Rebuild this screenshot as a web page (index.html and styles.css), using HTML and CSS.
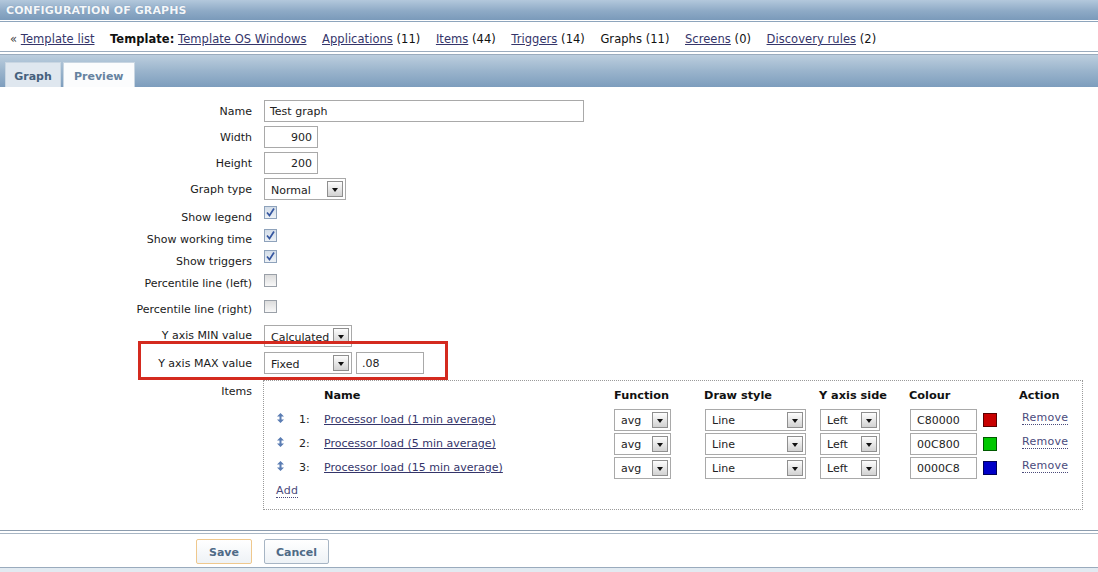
FILE: index.html
```html
<!DOCTYPE html>
<html>
<head>
<meta charset="utf-8">
<link rel="stylesheet" href="styles.css">
</head>
<body>
<div class="page">
  <div class="hdr">CONFIGURATION OF GRAPHS</div>
  <div class="nav">
    <span class="nav-item"><span class="raquo">&laquo;</span> <a href="#">Template list</a></span>
    <span class="nav-item"><b>Template:</b> <a href="#">Template OS Windows</a></span>
    <span class="nav-item"><a href="#">Applications</a> (11)</span>
    <span class="nav-item"><a href="#">Items</a> (44)</span>
    <span class="nav-item"><a href="#">Triggers</a> (14)</span>
    <span class="nav-item">Graphs (11)</span>
    <span class="nav-item"><a href="#">Screens</a> (0)</span>
    <span class="nav-item"><a href="#">Discovery rules</a> (2)</span>
  </div>
  <div class="sep"></div>
  <div class="tabbar">
    <div class="tab active">Graph</div>
    <div class="tab">Preview</div>
  </div>

  <div class="form">
    <div class="row r-text">
      <div class="lbl">Name</div>
      <div class="ctl"><div class="inp w-name">Test graph</div></div>
    </div>
    <div class="row r-text">
      <div class="lbl">Width</div>
      <div class="ctl"><div class="inp w-num num">900</div></div>
    </div>
    <div class="row r-text">
      <div class="lbl">Height</div>
      <div class="ctl"><div class="inp w-num num">200</div></div>
    </div>
    <div class="row r-text">
      <div class="lbl">Graph type</div>
      <div class="ctl"><div class="sel w-type"><span class="sel-t">Normal</span><span class="arr"></span></div></div>
    </div>
    <div class="row r-legend">
      <div class="lbl">Show legend</div>
      <div class="ctl"><span class="cb on"><svg viewBox="0 0 13 13" width="13" height="13"><path d="M3 6.5 L5.5 9.5 L10 2.5" fill="none" stroke="#3556a0" stroke-width="1.7"/></svg></span></div>
    </div>
    <div class="row r-work">
      <div class="lbl">Show working time</div>
      <div class="ctl"><span class="cb on"><svg viewBox="0 0 13 13" width="13" height="13"><path d="M3 6.5 L5.5 9.5 L10 2.5" fill="none" stroke="#3556a0" stroke-width="1.7"/></svg></span></div>
    </div>
    <div class="row r-trig">
      <div class="lbl">Show triggers</div>
      <div class="ctl"><span class="cb on"><svg viewBox="0 0 13 13" width="13" height="13"><path d="M3 6.5 L5.5 9.5 L10 2.5" fill="none" stroke="#3556a0" stroke-width="1.7"/></svg></span></div>
    </div>
    <div class="row r-pl">
      <div class="lbl">Percentile line (left)</div>
      <div class="ctl"><span class="cb"></span></div>
    </div>
    <div class="row r-pr">
      <div class="lbl">Percentile line (right)</div>
      <div class="ctl"><span class="cb"></span></div>
    </div>
    <div class="row r-min">
      <div class="lbl">Y axis MIN value</div>
      <div class="ctl"><div class="sel w-y"><span class="sel-t">Calculated</span><span class="arr"></span></div></div>
    </div>
    <div class="row r-max">
      <div class="lbl">Y axis MAX value</div>
      <div class="ctl ctl-inline"><div class="sel w-y"><span class="sel-t">Fixed</span><span class="arr"></span></div><div class="inp w-max">.08</div></div>
      <div class="highlight"></div>
    </div>
    <div class="row r-items">
      <div class="lbl">Items</div>
      <div class="ctl">
        <div class="items">
          <div class="irow ihead">
            <span></span><span></span><span></span>
            <span>Name</span><span>Function</span><span>Draw style</span><span>Y axis side</span><span>Colour</span><span>Action</span>
          </div>
          <div class="irow">
            <span></span>
            <span class="drag"><svg viewBox="0 0 7 10" width="7" height="10"><path d="M3.5 0 L7 3.5 H4.5 V6.5 H7 L3.5 10 L0 6.5 H2.5 V3.5 H0 Z" fill="#5b7db3"/></svg></span>
            <span class="nr">1:</span>
            <span><a href="#">Processor load (1 min average)</a></span>
            <span><span class="sel w-fn"><span class="sel-t">avg</span><span class="arr"></span></span></span>
            <span class="c-draw"><span class="sel w-draw"><span class="sel-t">Line</span><span class="arr"></span></span></span>
            <span class="c-draw"><span class="sel w-side"><span class="sel-t">Left</span><span class="arr"></span></span></span>
            <span class="c-col"><span class="inp w-col">C80000</span><span class="sw sw-r"></span></span>
            <span class="c-act"><a href="#" class="dot">Remove</a></span>
          </div>
          <div class="irow">
            <span></span>
            <span class="drag"><svg viewBox="0 0 7 10" width="7" height="10"><path d="M3.5 0 L7 3.5 H4.5 V6.5 H7 L3.5 10 L0 6.5 H2.5 V3.5 H0 Z" fill="#5b7db3"/></svg></span>
            <span class="nr">2:</span>
            <span><a href="#">Processor load (5 min average)</a></span>
            <span><span class="sel w-fn"><span class="sel-t">avg</span><span class="arr"></span></span></span>
            <span class="c-draw"><span class="sel w-draw"><span class="sel-t">Line</span><span class="arr"></span></span></span>
            <span class="c-draw"><span class="sel w-side"><span class="sel-t">Left</span><span class="arr"></span></span></span>
            <span class="c-col"><span class="inp w-col">00C800</span><span class="sw sw-g"></span></span>
            <span class="c-act"><a href="#" class="dot">Remove</a></span>
          </div>
          <div class="irow">
            <span></span>
            <span class="drag"><svg viewBox="0 0 7 10" width="7" height="10"><path d="M3.5 0 L7 3.5 H4.5 V6.5 H7 L3.5 10 L0 6.5 H2.5 V3.5 H0 Z" fill="#5b7db3"/></svg></span>
            <span class="nr">3:</span>
            <span><a href="#">Processor load (15 min average)</a></span>
            <span><span class="sel w-fn"><span class="sel-t">avg</span><span class="arr"></span></span></span>
            <span class="c-draw"><span class="sel w-draw"><span class="sel-t">Line</span><span class="arr"></span></span></span>
            <span class="c-draw"><span class="sel w-side"><span class="sel-t">Left</span><span class="arr"></span></span></span>
            <span class="c-col"><span class="inp w-col">0000C8</span><span class="sw sw-b"></span></span>
            <span class="c-act"><a href="#" class="dot">Remove</a></span>
          </div>
          <div class="add"><a href="#" class="dot add-link">Add</a></div>
        </div>
      </div>
    </div>
  </div>

  <div class="footer">
    <div class="fbtns">
      <div class="fl"><span class="btn save">Save</span></div>
      <div class="fr"><span class="btn cancel">Cancel</span></div>
    </div>
  </div>
</div>
</body>
</html>
```

FILE: styles.css
```css
* { box-sizing: border-box; }
html, body { margin: 0; padding: 0; background: #fff; }
body { font-family: "DejaVu Sans", Verdana, sans-serif; font-size: 11px; color: #1a1a1a; }
.page { width: 1098px; height: 572px; overflow: hidden; }

a { color: #35356a; text-decoration: underline; }

.hdr {
  height: 21px;
  padding: 4px 0 0 6px;
  background: linear-gradient(#b3c8dc, #8eaac6 55%, #7a9aba);
  color: #f4f7fa;
  font-weight: bold;
  font-size: 11px;
  line-height: 14px;
  border-bottom: 1px solid #fff;
  text-shadow: 0 0 1px #6a88a8;
  letter-spacing: 0.1px;
}

.nav {
  height: 31px;
  border-top: 1px solid #8ea5bc;
  border-bottom: 1px solid #9aabbd;
  display: flex;
  align-items: center;
  padding-left: 10px;
  padding-top: 5px;
  font-size: 11.5px;
  letter-spacing: 0.05px;
  color: #111;
}
.nav-item { margin-right: 15.5px; white-space: nowrap; }
.raquo { color: #444; }

.sep { height: 3px; border-bottom: 1px solid #9aabbd; }

.tabbar {
  height: 32px;
  padding: 6px 0 0 5px;
  display: flex;
  gap: 2px;
  align-items: flex-end;
  background: linear-gradient(#bccede, #9ab4cc 50%, #7d9dbd);
}
.tab {
  height: 25px;
  padding: 2px 10px 0;
  display: flex;
  align-items: center;
  font-weight: bold;
  font-size: 11px;
  color: #6582a0;
  background: #fbfcfd;
  border: 1px solid #c9d6e2;
  border-bottom: none;
}
.tab.active { background: #dfe7ef; color: #45607d; width: 56px; justify-content: center; }

.form { padding-top: 13px; }
.row {
  display: grid;
  grid-template-columns: 252px 1fr;
  column-gap: 12px;
  align-items: start;
  position: relative;
}
.lbl { text-align: right; line-height: 14px; padding-top: 5px; white-space: nowrap; }
.r-text { height: 26px; }
.r-legend { height: 24px; }
.r-legend .lbl { padding-top: 7px; }
.r-legend .cb { margin-top: 2px; }
.r-work { height: 22px; }
.r-work .cb { margin-top: 1px; }
.r-trig { height: 22px; }
.r-pl { height: 24px; }
.r-pl .cb { margin-top: 2px; }
.r-pr { height: 27px; }
.r-pr .lbl { padding-top: 7px; }
.r-pr .cb { margin-top: 4px; }
.r-min { height: 27px; }
.r-min .lbl { padding-top: 6px; }
.r-min .ctl { margin-top: 2px; }
.r-max { height: 30px; }
.r-max .lbl { padding-top: 7px; }
.r-max .ctl { margin-top: 2px; }

.ctl-inline { display: flex; gap: 4px; }

.inp {
  display: inline-flex;
  align-items: center;
  height: 22px;
  padding: 1px 5px 0;
  border: 1px solid #a9a9a9;
  background: #fff;
  color: #222;
  white-space: nowrap;
}
.num { justify-content: flex-end; }
.w-name { width: 320px; }
.w-num { width: 54px; }
.w-max { width: 68px; }
.w-col { width: 67px; padding-left: 6px; }

.sel {
  display: inline-flex;
  align-items: center;
  justify-content: space-between;
  height: 22px;
  padding: 0 2px 0 6px;
  border: 1px solid #a9a9a9;
  background: #fff;
  color: #222;
  white-space: nowrap;
}
.sel-t { padding-top: 2px; }
.arr {
  width: 16px;
  height: 16px;
  border: 1px solid #8f8f8f;
  background: linear-gradient(#fdfdfd, #d2d2d2);
  position: relative;
  flex: none;
}
.arr::after {
  content: "";
  position: absolute;
  left: 4px;
  top: 6px;
  border-left: 3.5px solid transparent;
  border-right: 3.5px solid transparent;
  border-top: 4px solid #111;
}
.w-type { width: 82px; }
.w-y { width: 88px; }
.w-fn { width: 57px; }
.w-draw { width: 101px; }
.w-side { width: 60px; }

.cb {
  display: block;
  width: 13px;
  height: 13px;
  border: 1px solid #9aa0a8;
  background: linear-gradient(#dcdcdc, #f8f8f8);
}
.cb svg { display: block; margin: -1px 0 0 -1px; }
.cb.on { border-color: #8ea2bb; background: linear-gradient(#d2dce8, #eef2f6); }

.highlight {
  position: absolute;
  left: 138px;
  top: -9px;
  width: 310px;
  height: 39px;
  border: 3px solid #d42a1f;
  pointer-events: none;
}

.items {
  margin-left: -1px;
  width: 820px;
  height: 130px;
  border: 1px dotted #9a9a9a;
  padding-top: 5px;
}
.irow {
  display: grid;
  grid-template-columns: 13px 22px 25px 290px 90px 115px 90px 110px 1fr;
  align-items: center;
  height: 24px;
}
.irow > span { padding-top: 1px; }
.ihead { height: 21px; align-items: start; font-weight: bold; line-height: 18px; font-size: 11.3px; color: #111; }
.drag svg { display: block; margin-top: -3px; }
.nr { color: #222; }
.c-draw { padding-left: 1px; }
.c-col { padding-left: 1px; display: flex; align-items: center; gap: 6px; }
.sw { width: 14px; height: 14px; display: block; }
.sw-r { background: #c80000; border: 1px solid #5a0000; }
.sw-g { background: #00c800; border: 1px solid #005a00; }
.sw-b { background: #0000c8; border: 1px solid #00005a; }
.c-act { padding-left: 3px; }
a.dot { text-decoration: none; border-bottom: 1px dotted #4a4a7a; color: #4a4a7c; letter-spacing: 0.3px; }
.c-act a { position: relative; top: -2px; }
.add { padding: 5px 0 0 12px; height: 22px; }
.add-link { color: #44446a; }

.footer { margin-top: 20px; }
.fbtns {
  border-top: 1px solid #8c9cae;
  box-shadow: inset 0 2px 0 #fff, inset 0 3px 0 #a8b6c4;
  height: 38px;
  padding-top: 8px;
  display: grid;
  grid-template-columns: 252px 1fr;
  column-gap: 12px;
  align-items: start;
  border-bottom: 1px solid #9aabbd;
  background: #fff;
}
.fl { text-align: right; }
.btn {
  display: inline-flex;
  align-items: center;
  justify-content: center;
  height: 25px;
  padding: 1px 13px 0;
  border: 1px solid #a7b5c4;
  border-radius: 2px;
  background: linear-gradient(#ffffff, #eef2f6);
  font-weight: bold;
  color: #4f6a86;
}
.btn.save { border-color: #efc88d; width: 56px; }
.btn.cancel { width: 65px; padding: 1px 0 0; }
.footer::after { content: ""; display: block; height: 10px; background: #e2eaf1; }
```
